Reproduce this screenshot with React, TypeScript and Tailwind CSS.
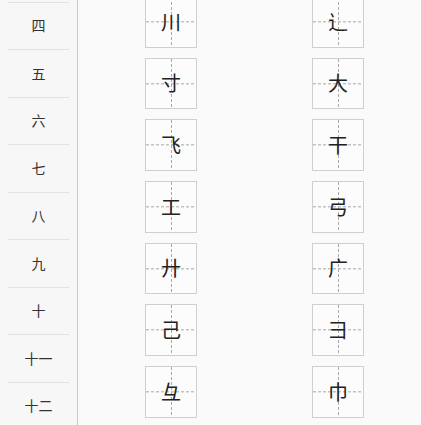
import React from "react";

const levels = ["四", "五", "六", "七", "八", "九", "十", "十一", "十二"];

const pairs: [string, string][] = [
  ["川", "辶"],
  ["寸", "大"],
  ["飞", "干"],
  ["工", "弓"],
  ["廾", "广"],
  ["己", "彐"],
  ["彑", "巾"],
];

const cjk = { fontFamily: '"Noto Sans CJK SC", "Noto Sans", sans-serif' };

function CharBox({ ch }: { ch: string }) {
  return (
    <div className="relative flex h-[51.67px] w-[52px] items-center justify-center border border-[#cfcfcf] bg-[#fcfcfc]">
      <svg className="absolute inset-0 h-full w-full" viewBox="0 0 50 50" preserveAspectRatio="none">
        <line x1="25.5" y1="0" x2="25.5" y2="50" stroke="#a8a8a8" strokeWidth="1" strokeDasharray="3 2" vectorEffect="non-scaling-stroke" />
        <line x1="0" y1="25" x2="50" y2="25" stroke="#a8a8a8" strokeWidth="1" strokeDasharray="3 2" vectorEffect="non-scaling-stroke" />
      </svg>
      <span className="relative text-[20px] leading-none text-[#222]" style={cjk}>
        {ch}
      </span>
    </div>
  );
}

export default function App() {
  return (
    <div className="flex h-[425px] w-[421px] overflow-hidden bg-[#fafafa]" style={cjk}>
      <div className="w-[78px] shrink-0 border-r border-[#c9c9c9] bg-[#f7f7f7]">
        <div className="pt-[1.5px]">
          {levels.map((l) => (
            <div
              key={l}
              className="mx-2 flex h-[47.5px] items-center justify-center border-t border-[#e2e2e2] text-[14px] text-[#333]"
            >
              {l}
            </div>
          ))}
        </div>
      </div>
      <div className="flex-1">
        <div className="mt-[-4px] grid grid-cols-[52px_52px] gap-x-[115px] gap-y-[10px] pl-[67px]">
          {pairs.map(([a, b]) => (
            <React.Fragment key={a}>
              <CharBox ch={a} />
              <CharBox ch={b} />
            </React.Fragment>
          ))}
        </div>
      </div>
    </div>
  );
}
